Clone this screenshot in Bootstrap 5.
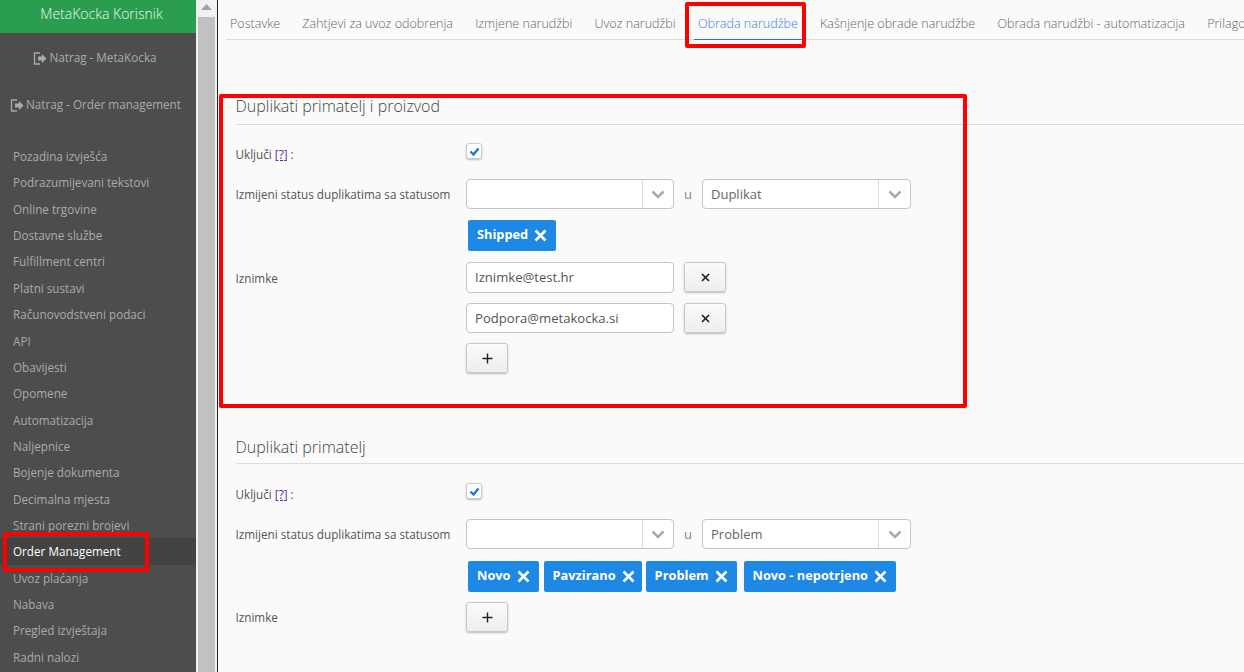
<!DOCTYPE html>
<html lang="hr"><head><meta charset="utf-8"><title>MetaKocka</title>
<link href="https://cdn.jsdelivr.net/npm/bootstrap@5.3.0/dist/css/bootstrap.min.css" rel="stylesheet">
<style>
html,body{height:672px;overflow:hidden}
body{font-family:"Open Sans","Liberation Sans",sans-serif;font-size:11.7px;color:#555;background:#fafafa}
.shell{height:672px;width:1244px;overflow:hidden}
.side{width:196px;height:672px;background:#4d4d4d;flex:none;overflow:hidden}
.side-head{height:33px;background:#2a9d4f;color:#e8f8ee;font-size:14px;line-height:28px;text-align:center;padding-left:7px;font-weight:300}
.back{color:#aaa;text-align:center;display:flex;align-items:center;justify-content:center;gap:2px;white-space:nowrap;text-decoration:none}
.back svg{flex:none}
.back-a{height:24px;margin-top:13px;padding-right:6px}
.back-b{height:24px;margin-top:23px;padding-right:5px}
.side-list{margin-top:26px;padding:0}
.side-list a{display:block;height:26.37px;line-height:26.2px;padding-left:13px;color:#aaa;text-decoration:none}
.side-list a.on{background:#434343;color:#fff}
.sbar{width:21px;flex:none;background:#f1f1f1;padding:0 2px 0 2px}
.sbar-up{height:17px;display:flex;justify-content:center;padding-top:4px}
.sbar-th{height:655px;background:#c1c1c1}
.rule{width:1px;flex:none;background:#222}
.main{flex:1;min-width:0;position:relative;padding:0 0 0 8px;background:#fafafa;overflow:hidden}
.tabs{height:40px;border-bottom:1px solid #ddd;display:flex;white-space:nowrap;font-weight:300;font-size:12.55px}
.tabs a{display:block;padding:15px 4px 0 4px;margin-right:14.2px;color:#666;text-decoration:none;line-height:18px;height:40px}
.tabs a.on{color:#2f86d8;border-bottom:1px solid #2a78c8}
.sect{margin-left:9.5px}
.sect-title{font-size:16px;font-weight:300;line-height:22px;color:#444;border-bottom:1px solid #ddd;height:30px;margin:0}
.s1{margin-top:55px}
.s2{margin-top:63px}
.s2 .sect-title{height:28px}
.frow{display:flex}
.flabel{width:230.5px;flex:none;color:#555}
.flabel-mid{line-height:30px}
.flabel-low{line-height:32px}
.help{color:#5a2ca0;text-decoration:underline}
.tick{width:16px;height:16px;background:#fff;border:1px solid #ccc;border-radius:3px;box-shadow:0 1px 2px rgba(0,0,0,.25);display:flex;align-items:center;justify-content:center}
.pick{width:208px;height:30px;background:#fff;border:1px solid #c4c4c4;border-radius:4px;display:flex;font-size:13px;color:#666;line-height:28px}
.u-sep + .pick{width:209px}
.pick-val{flex:1;padding-left:8px}
.pick-arrow{width:31px;border-left:1px solid #ddd;display:flex;align-items:center;justify-content:center}
.u-sep + .pick .pick-arrow{width:32px}
.u-sep{width:28px;text-align:center;color:#888;font-size:13px;line-height:30px}
.chips{display:flex;padding-left:2px}
.chip{height:31px;background:#1e88e5;color:#fff;font-weight:700;font-size:12.8px;border-radius:2px;padding:0 9px 2px 9px;display:flex;align-items:center;gap:6px;line-height:1}
.chip svg{margin-top:2px}
.chip:nth-child(2){margin-left:5px;padding-right:7px}
.chip:nth-child(3){margin-left:4px}
.chip:nth-child(4){margin-left:7px}
.field{width:208px;height:31px;background:#fff;border:1px solid #c4c4c4;border-radius:4px;padding:0 8px;line-height:29px;font-size:13.1px;color:#555;margin-right:10px}
.field-short{height:30px;line-height:28px}
.sq{width:42px;height:30px;padding:0;border:1px solid #c8c8c8;border-radius:3px;background:linear-gradient(#fafafa,#eee);box-shadow:0 1px 2px rgba(0,0,0,.25);display:flex;align-items:center;justify-content:center}
.mark-box{position:absolute;border:4px solid #f00;border-radius:2px;pointer-events:none}
.mb-tabs{left:685px;top:2px;width:121px;height:46px}
.mb-form{left:219px;top:94px;width:748px;height:314px}
.mb-side{left:3px;top:532px;width:146px;height:40px}
.r1{margin-top:14px;height:29px;padding-top:7px}
.r1 .tick{margin-top:-3px}
.s2 .r1{height:30px;padding-top:8px}
.r2{margin-top:11px;align-items:center}
.r2 .flabel{padding-top:2px}
.r3{margin-top:11px}
.s2 .r3{margin-top:12px}
.r4{margin-top:11px}
.r5{margin-top:9px}
.r6{margin-top:10px}
.r7{margin-top:10px}
.pad{margin-left:230.5px}
</style></head><body>
<div class="shell d-flex position-relative">
 <nav class="side">
  <div class="side-head">MetaKocka Korisnik</div>
  <a class="back back-a" href="#"><svg width="14" height="13" viewBox="0 0 14 13"><path d="M7 1H1.5v11H7" fill="none" stroke="#aaa" stroke-width="1.3"/><path d="M5 4.5h4V2l4.5 4.5L9 11V8.5H5z" fill="#aaa"/></svg>Natrag - MetaKocka</a>
  <a class="back back-b" href="#"><svg width="14" height="13" viewBox="0 0 14 13"><path d="M7 1H1.5v11H7" fill="none" stroke="#aaa" stroke-width="1.3"/><path d="M5 4.5h4V2l4.5 4.5L9 11V8.5H5z" fill="#aaa"/></svg>Natrag - Order management</a>
  <div class="side-list">
   <a href="#">Pozadina izvješća</a><a href="#">Podrazumijevani tekstovi</a><a href="#">Online trgovine</a><a href="#">Dostavne službe</a><a href="#">Fulfillment centri</a><a href="#">Platni sustavi</a><a href="#">Računovodstveni podaci</a><a href="#">API</a><a href="#">Obavijesti</a><a href="#">Opomene</a><a href="#">Automatizacija</a><a href="#">Naljepnice</a><a href="#">Bojenje dokumenta</a><a href="#">Decimalna mjesta</a><a href="#">Strani porezni brojevi</a><a class="on" href="#">Order Management</a><a href="#">Uvoz plaćanja</a><a href="#">Nabava</a><a href="#">Pregled izvještaja</a><a href="#">Radni nalozi</a>
  </div>
 </nav>
 <div class="sbar"><div class="sbar-up"><svg width="11" height="6" viewBox="0 0 11 6"><path d="M5.5 0L11 6H0z" fill="#a3a3a3"/></svg></div><div class="sbar-th"></div></div>
 <div class="rule"></div>
 <main class="main">
  <div class="tabs"><a href="#">Postavke</a><a href="#">Zahtjevi za uvoz odobrenja</a><a href="#">Izmjene narudžbi</a><a href="#">Uvoz narudžbi</a><a class="on" href="#">Obrada narudžbe</a><a href="#">Kašnjenje obrade narudžbe</a><a href="#">Obrada narudžbi - automatizacija</a><a href="#">Prilagođavanje</a></div>

  <section class="sect s1">
   <h2 class="sect-title">Duplikati primatelj i proizvod</h2>
   <div class="frow r1"><div class="flabel">Uključi <a class="help" href="#">[?]</a> :</div><div class="tick"><svg width="11" height="9" viewBox="0 0 11 9"><path d="M1.5 4.5l3 3 5-6" fill="none" stroke="#1e78d2" stroke-width="2.4"/></svg></div></div>
   <div class="frow r2"><div class="flabel">Izmijeni status duplikatima sa statusom</div>
    <div class="pick"><div class="pick-val"></div><div class="pick-arrow"><svg width="14" height="9" viewBox="0 0 14 9"><path d="M1.5 1.5L7 7l5.5-5.5" fill="none" stroke="#aaa" stroke-width="2.6"/></svg></div></div>
    <div class="u-sep">u</div>
    <div class="pick"><div class="pick-val">Duplikat</div><div class="pick-arrow"><svg width="14" height="9" viewBox="0 0 14 9"><path d="M1.5 1.5L7 7l5.5-5.5" fill="none" stroke="#aaa" stroke-width="2.6"/></svg></div></div>
   </div>
   <div class="r3 pad chips"><span class="chip">Shipped <svg width="13" height="13" viewBox="0 0 13 13"><path d="M1.5 1.5l10 10m0-10l-10 10" stroke="#fff" stroke-width="2.6"/></svg></span></div>
   <div class="frow r4"><div class="flabel flabel-low">Iznimke</div><div class="field">Iznimke@test.hr</div><button class="sq" type="button"><svg width="9" height="9" viewBox="0 0 9 9"><path d="M1 1l7 7m0-7l-7 7" stroke="#222" stroke-width="1.7"/></svg></button></div>
   <div class="frow r5 pad"><div class="field field-short">Podpora@metakocka.si</div><button class="sq" type="button"><svg width="9" height="9" viewBox="0 0 9 9"><path d="M1 1l7 7m0-7l-7 7" stroke="#222" stroke-width="1.7"/></svg></button></div>
   <div class="r6 pad"><button class="sq" type="button"><svg width="11" height="11" viewBox="0 0 11 11"><path d="M5.5 .5v10M.5 5.5h10" stroke="#222" stroke-width="1.4"/></svg></button></div>
  </section>

  <section class="sect s2">
   <h2 class="sect-title">Duplikati primatelj</h2>
   <div class="frow r1"><div class="flabel">Uključi <a class="help" href="#">[?]</a> :</div><div class="tick"><svg width="11" height="9" viewBox="0 0 11 9"><path d="M1.5 4.5l3 3 5-6" fill="none" stroke="#1e78d2" stroke-width="2.4"/></svg></div></div>
   <div class="frow r2"><div class="flabel">Izmijeni status duplikatima sa statusom</div>
    <div class="pick"><div class="pick-val"></div><div class="pick-arrow"><svg width="14" height="9" viewBox="0 0 14 9"><path d="M1.5 1.5L7 7l5.5-5.5" fill="none" stroke="#aaa" stroke-width="2.6"/></svg></div></div>
    <div class="u-sep">u</div>
    <div class="pick"><div class="pick-val">Problem</div><div class="pick-arrow"><svg width="14" height="9" viewBox="0 0 14 9"><path d="M1.5 1.5L7 7l5.5-5.5" fill="none" stroke="#aaa" stroke-width="2.6"/></svg></div></div>
   </div>
   <div class="r3 pad chips">
    <span class="chip">Novo <svg width="13" height="13" viewBox="0 0 13 13"><path d="M1.5 1.5l10 10m0-10l-10 10" stroke="#fff" stroke-width="2.6"/></svg></span>
    <span class="chip">Pavzirano <svg width="13" height="13" viewBox="0 0 13 13"><path d="M1.5 1.5l10 10m0-10l-10 10" stroke="#fff" stroke-width="2.6"/></svg></span>
    <span class="chip">Problem <svg width="13" height="13" viewBox="0 0 13 13"><path d="M1.5 1.5l10 10m0-10l-10 10" stroke="#fff" stroke-width="2.6"/></svg></span>
    <span class="chip">Novo - nepotrjeno <svg width="13" height="13" viewBox="0 0 13 13"><path d="M1.5 1.5l10 10m0-10l-10 10" stroke="#fff" stroke-width="2.6"/></svg></span>
   </div>
   <div class="frow r7"><div class="flabel flabel-mid">Iznimke</div><button class="sq" type="button"><svg width="11" height="11" viewBox="0 0 11 11"><path d="M5.5 .5v10M.5 5.5h10" stroke="#222" stroke-width="1.4"/></svg></button></div>
  </section>
 </main>
 <div class="mark-box mb-tabs"></div>
 <div class="mark-box mb-form"></div>
 <div class="mark-box mb-side"></div>
</div>
<script src="https://cdn.jsdelivr.net/npm/bootstrap@5.3.0/dist/js/bootstrap.bundle.min.js"></script>
</body></html>
